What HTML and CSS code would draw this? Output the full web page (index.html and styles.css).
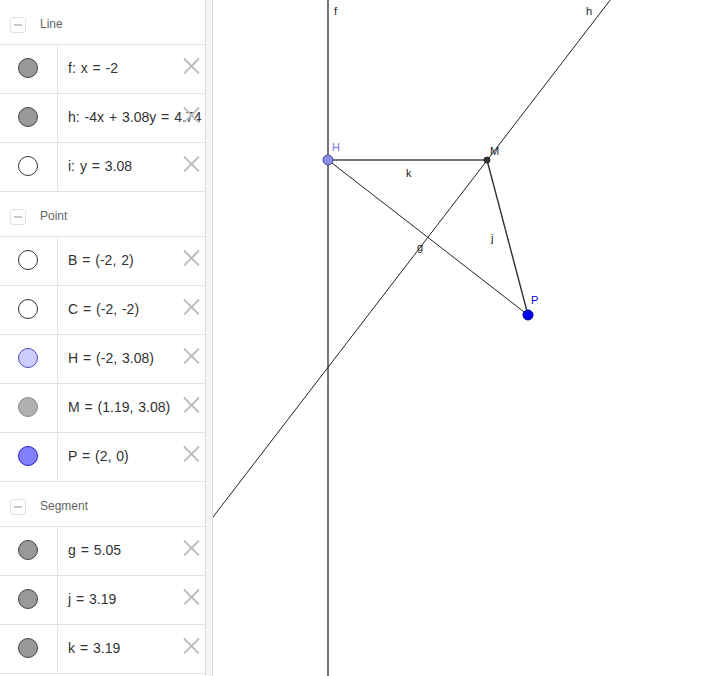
FILE: index.html
```html
<!DOCTYPE html>
<html>
<head>
<meta charset="utf-8">
<link rel="stylesheet" href="styles.css">
</head>
<body>
<div class="app">
  <div class="sidebar">
    <div class="group-head"><span class="toggle"></span><span class="group-name">Line</span></div>
    <div class="row"><div class="marble-cell"><span class="marble dark"></span></div><div class="text-cell"><span class="label">f: x = -2</span><span class="del"></span></div></div>
    <div class="row"><div class="marble-cell"><span class="marble dark"></span></div><div class="text-cell"><span class="label">h: -4x + 3.08y = 4.74</span><span class="del"></span></div></div>
    <div class="row"><div class="marble-cell"><span class="marble empty"></span></div><div class="text-cell"><span class="label">i: y = 3.08</span><span class="del"></span></div></div>
    <div class="group-head"><span class="toggle"></span><span class="group-name">Point</span></div>
    <div class="row"><div class="marble-cell"><span class="marble empty"></span></div><div class="text-cell"><span class="label">B = (-2, 2)</span><span class="del"></span></div></div>
    <div class="row"><div class="marble-cell"><span class="marble empty"></span></div><div class="text-cell"><span class="label">C = (-2, -2)</span><span class="del"></span></div></div>
    <div class="row"><div class="marble-cell"><span class="marble lilac"></span></div><div class="text-cell"><span class="label">H = (-2, 3.08)</span><span class="del"></span></div></div>
    <div class="row"><div class="marble-cell"><span class="marble light"></span></div><div class="text-cell"><span class="label">M = (1.19, 3.08)</span><span class="del"></span></div></div>
    <div class="row"><div class="marble-cell"><span class="marble blue"></span></div><div class="text-cell"><span class="label">P = (2, 0)</span><span class="del"></span></div></div>
    <div class="group-head"><span class="toggle"></span><span class="group-name">Segment</span></div>
    <div class="row"><div class="marble-cell"><span class="marble dark"></span></div><div class="text-cell"><span class="label">g = 5.05</span><span class="del"></span></div></div>
    <div class="row"><div class="marble-cell"><span class="marble dark"></span></div><div class="text-cell"><span class="label">j = 3.19</span><span class="del"></span></div></div>
    <div class="row"><div class="marble-cell"><span class="marble dark"></span></div><div class="text-cell"><span class="label">k = 3.19</span><span class="del"></span></div></div>
  </div>
  <div class="splitter"></div>
  <div class="graphics">
    <svg class="canvas" width="491" height="676" viewBox="0 0 491 676">
      <line x1="115" y1="0" x2="115" y2="676" stroke="#777" stroke-width="2"/>
      <line x1="-2" y1="519.6" x2="398" y2="-1" stroke="#222" stroke-width="1"/>
      <line x1="115" y1="160" x2="315" y2="315" stroke="#222" stroke-width="1"/>
      <line x1="274" y1="160" x2="315" y2="315" stroke="#333" stroke-width="1.4"/>
      <line x1="115" y1="160" x2="274" y2="160" stroke="#777" stroke-width="2"/>
      <circle cx="115" cy="160" r="5" fill="#8d8dec" stroke="#4848a8" stroke-width="1"/>
      <circle cx="274" cy="160" r="3" fill="#333" stroke="#222" stroke-width="1"/>
      <circle cx="315" cy="315" r="5" fill="#0000ee" stroke="#00008a" stroke-width="1"/>
      <text class="lbl" x="121" y="15">f</text>
      <text class="lbl" x="373" y="15">h</text>
      <text class="lbl lbl-h" x="119" y="151">H</text>
      <text class="lbl" x="277" y="155">M</text>
      <text class="lbl" x="193" y="177">k</text>
      <text class="lbl" x="204" y="251">g</text>
      <text class="lbl" x="278" y="242">j</text>
      <text class="lbl lbl-p" x="318" y="304">P</text>
    </svg>
  </div>
</div>
</body>
</html>
```
FILE: styles.css
```css
html, body {
  margin: 0;
  padding: 0;
  background: #fff;
}
body {
  width: 704px;
  height: 676px;
  overflow: hidden;
  font-family: "Liberation Sans", Arial, sans-serif;
}
.app {
  display: flex;
  height: 676px;
}
.sidebar {
  width: 205px;
  flex: none;
  border-right: 1px solid #dcdcdc;
  display: flex;
  flex-direction: column;
}
.splitter {
  width: 6px;
  flex: none;
  background: #f6f6f6;
  border-right: 1px solid #dcdcdc;
}
.graphics {
  flex: 1;
  overflow: hidden;
}
.canvas {
  display: block;
}
.group-head {
  height: 44px;
  border-bottom: 1px solid #e4e4e4;
  display: flex;
  align-items: center;
  padding-left: 10px;
}
.toggle {
  width: 14px;
  height: 14px;
  border: 1px solid #e0e0e0;
  border-radius: 3px;
  display: flex;
  align-items: center;
  justify-content: center;
  margin-top: 6px;
}
.toggle::before {
  content: "";
  width: 8px;
  height: 2px;
  background: #c8c8c8;
}
.group-name {
  margin-left: 14px;
  margin-top: 3px;
  font-size: 12px;
  color: #666;
}
.row {
  height: 48px;
  border-bottom: 1px solid #e4e4e4;
  display: flex;
}
.marble-cell {
  width: 57px;
  flex: none;
  border-right: 1px solid #e4e4e4;
  display: flex;
  align-items: center;
  justify-content: center;
}
.marble {
  width: 18px;
  height: 18px;
  border-radius: 50%;
  border: 1px solid #333;
  margin-right: 1px;
  margin-top: -3px;
}
.marble.dark { background: #999; border-color: #444; }
.marble.empty { background: #fff; border-color: #333; }
.marble.lilac { background: #ccccff; border-color: #4a4ab0; }
.marble.light { background: #b0b0b0; border-color: #8a8a8a; }
.marble.blue { background: #8080ff; border-color: #2020c0; }
.text-cell {
  flex: 1;
  min-width: 0;
  display: grid;
  align-items: center;
}
.label {
  grid-area: 1 / 1;
  padding-left: 10px;
  font-size: 14px;
  word-spacing: 1px;
  color: #333;
  white-space: nowrap;
  margin-top: -3px;
}
.del {
  grid-area: 1 / 1;
  justify-self: end;
  width: 16px;
  height: 16px;
  margin-right: 6px;
  margin-top: -6px;
  position: relative;
}
.del::before, .del::after {
  content: "";
  position: absolute;
  left: -2px;
  top: 7px;
  width: 21px;
  height: 1.6px;
  background: #bdbdbd;
  transform: rotate(45deg);
}
.del::after {
  transform: rotate(-45deg);
}
.lbl {
  font-family: "Liberation Sans", Arial, sans-serif;
  font-size: 11px;
  fill: #222;
}
.lbl-h {
  fill: #7373d9;
}
.lbl-p {
  fill: #0000cc;
}
```
